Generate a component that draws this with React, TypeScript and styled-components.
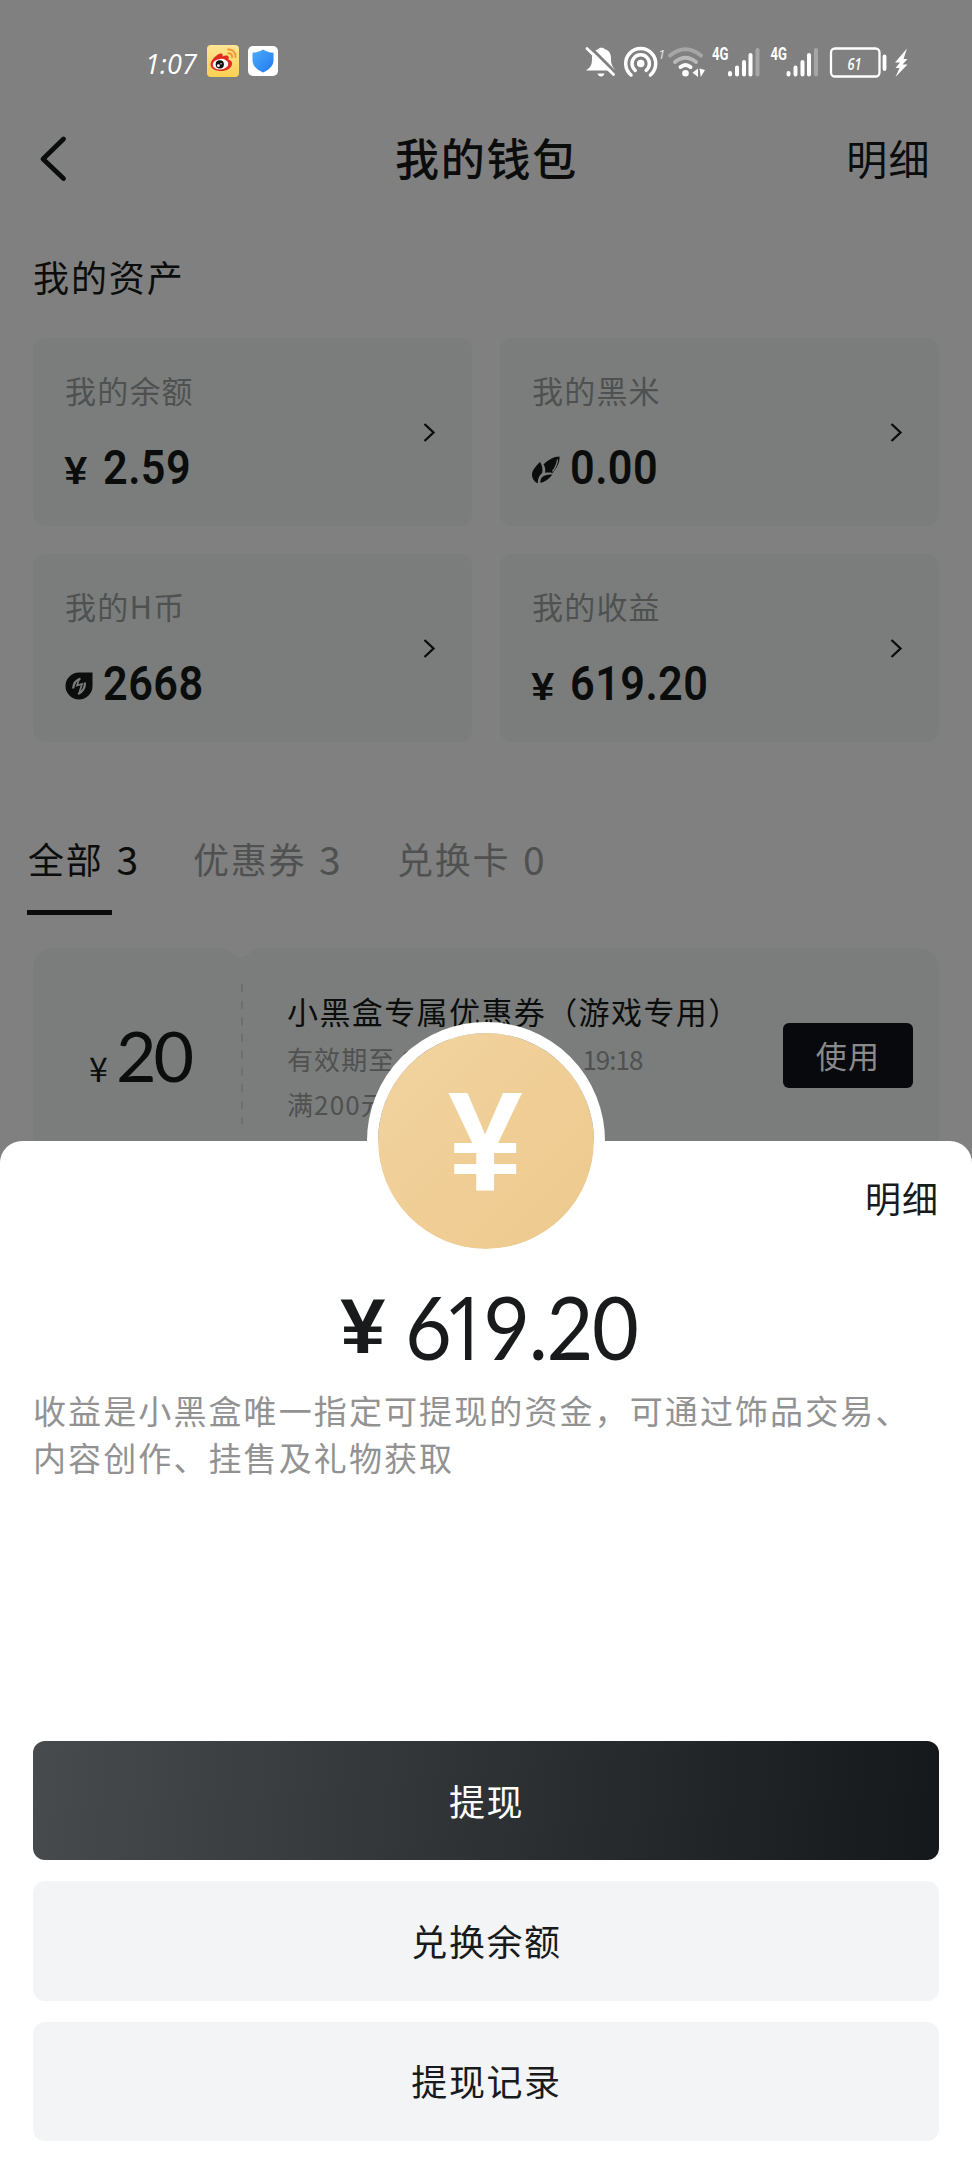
import React from "react";
import styled, { createGlobalStyle } from "styled-components";

const INK = "#0b0d0d";
const DIM = "#4f5151";
const CARD = "#7b7d7c";

const GlobalStyle = createGlobalStyle`
  * { box-sizing: border-box; }
  html, body { margin: 0; padding: 0; background: #808080; }
  body { font-family: "Noto Sans CJK SC", "Noto Sans", sans-serif; color: ${INK}; }
  button { font: inherit; border: 0; padding: 0; background: none; color: inherit; }
`;

const Screen = styled.div`
  position: relative;
  width: 972px;
  height: 2160px;
  overflow: hidden;
  background: #808080;
`;

const StatusBar = styled.header`
  height: 92px;
  padding: 31px 62px 1px 145px;
  display: flex;
  align-items: center;
  justify-content: space-between;
`;

const StatusGroup = styled.div`
  display: flex;
  align-items: center;
`;

const Clock = styled.span`
  width: 62px;
  font: italic 400 27px/60px "Open Sans", sans-serif;
  letter-spacing: 0.2px;
  color: #fff;
  padding-top: 5px;
`;

const NavBar = styled.nav`
  height: 132px;
  padding: 0 41px 0 38px;
  display: grid;
  grid-template-columns: 180px 1fr 180px;
  align-items: center;
`;

const NavTitle = styled.h1`
  margin: 0;
  text-align: center;
  font-size: 44px;
  font-weight: 500;
  line-height: 56px;
  letter-spacing: 1.7px;
  padding: 0 0 2px 4px;
`;

const NavAction = styled.button`
  justify-self: end;
  font-size: 41px;
  line-height: 56px;
  letter-spacing: 1.4px;
  padding-bottom: 2px;
`;

const SectionTitle = styled.h2`
  margin: 0;
  height: 114px;
  padding: 0 33px 10px;
  display: flex;
  align-items: center;
  font-size: 36px;
  font-weight: 400;
  letter-spacing: 1.9px;
`;

const AssetGrid = styled.section`
  padding: 0 33px;
  display: grid;
  grid-template-columns: 1fr 1fr;
  grid-auto-rows: 188px;
  gap: 28px;
`;

const AssetCard = styled.article`
  padding: 29px 36px 0 32px;
  display: flex;
  justify-content: space-between;
  border-radius: 12px;
  background: ${CARD};
`;

const AssetLabel = styled.div`
  height: 46px;
  line-height: 46px;
  font-size: 31px;
  letter-spacing: 1.2px;
  color: ${DIM};
`;

const AssetValue = styled.div`
  margin-top: 31px;
  height: 48px;
  display: flex;
  align-items: center;
`;

const AssetSymbol = styled.span`
  width: 38px;
  height: 48px;
  display: flex;
  align-items: center;
  padding-top: 4px;
`;

const Yen = styled.span<{ $size: number; $stretch: number }>`
  font-family: "Liberation Sans", sans-serif;
  font-weight: 700;
  font-size: ${(p) => p.$size}px;
  line-height: 1;
  transform: scaleX(${(p) => p.$stretch});
`;

const AssetNumber = styled.span`
  font-family: Roboto, sans-serif;
  font-weight: 600;
  font-size: 48px;
  line-height: 48px;
  letter-spacing: 0.5px;
  transform: scaleX(0.9);
  transform-origin: left;
`;

const ArrowCell = styled.div`
  padding-top: 54px;
`;

const Tabs = styled.div`
  margin-top: 93px;
  padding-left: 28px;
  height: 80px;
  display: flex;
`;

const Tab = styled.button<{ $active?: boolean; $width: number }>`
  width: ${(p) => p.$width}px;
  height: 80px;
  text-align: left;
  display: flex;
  flex-direction: column;
  justify-content: space-between;
  font-size: 36px;
  line-height: 46px;
  letter-spacing: 1.7px;
  color: ${(p) => (p.$active ? INK : DIM)};
`;

const TabText = styled.span`
  display: flex;
  gap: 13px;
`;

const TabCount = styled.span`
  font-size: 39px;
`;

const TabLine = styled.span`
  width: 85px;
  height: 5px;
  margin-left: -1px;
  background: ${INK};
`;

const Coupon = styled.section`
  position: relative;
  margin: 33px 33px 0;
  height: 260px;
  display: flex;
  border-radius: 20px;
  background: ${CARD};
`;

const CouponNotch = styled.svg`
  position: absolute;
  left: 190px;
  top: 0;
`;

const CouponAmount = styled.div`
  width: 208px;
  padding: 57px 0 0 56px;
  display: flex;
  align-items: baseline;
  line-height: 100px;
`;

const CouponYen = styled.span`
  width: 27px;
  font-size: 34px;
`;

const CouponNumber = styled.span`
  font-family: Lato, sans-serif;
  font-size: 70px;
  letter-spacing: -3px;
`;

const Perforation = styled.svg`
  margin-top: 36px;
  flex: none;
`;

const CouponInfo = styled.div`
  flex: 1;
  padding: 40px 0 0 44px;
  color: ${DIM};
  white-space: nowrap;
`;

const CouponTitle = styled.div`
  font-size: 31px;
  line-height: 46px;
  letter-spacing: 1.4px;
  color: ${INK};
  padding-bottom: 2px;
`;

const CouponMeta = styled.div`
  display: flex;
  font-size: 26px;
  line-height: 44px;
  letter-spacing: 1.1px;
  padding-top: 1px;
`;

const MetaDate = styled.span`
  width: 187px;
  padding-left: 7px;
  letter-spacing: 3.6px;
`;

const MetaTime = styled.span`
  letter-spacing: -1px;
`;

const UseButton = styled.button`
  width: 130px;
  height: 65px;
  margin: 75px 26px 0 0;
  border-radius: 6px;
  background: #08090c;
  color: #8a8a8c;
  font-size: 31px;
  letter-spacing: 1.2px;
  line-height: 62px;
  padding-bottom: 2px;
`;

const Sheet = styled.section`
  position: absolute;
  left: 0;
  right: 0;
  bottom: 0;
  height: 1019px;
  padding: 33px 33px 19px;
  display: flex;
  flex-direction: column;
  border-radius: 22px 22px 0 0;
  background: #fff;
  color: #181a1c;
`;

const Coin = styled.div`
  position: absolute;
  left: 367px;
  top: -119px;
  width: 238px;
  height: 238px;
  display: flex;
  align-items: center;
  justify-content: center;
  padding-right: 2px;
  border: 11px solid #fff;
  border-radius: 50%;
  background: linear-gradient(135deg, #f2d3a0, #edc98c) padding-box;
  color: #fff;
`;

const SheetAction = styled.button`
  align-self: flex-end;
  font-size: 36px;
  line-height: 46px;
  letter-spacing: 1px;
`;

const SheetAmount = styled.div`
  margin-top: 60px;
  height: 92px;
  padding-left: 308px;
  display: flex;
  align-items: center;
`;

const SheetYen = styled.span`
  width: 64px;
  display: flex;
`;

const SheetNumber = styled.span`
  font-family: Lato, sans-serif;
  font-weight: 400;
  font-size: 87px;
  line-height: 92px;
  letter-spacing: -1.5px;
  transform: scaleX(0.93);
  transform-origin: left;
`;

const NarrowDigit = styled.span`
  margin: 0 -5px 0 -8px;
  font-family: "Open Sans", sans-serif;
`;

const SheetNote = styled.p`
  margin: 15px 0 0;
  font-size: 33px;
  line-height: 47px;
  letter-spacing: 2.1px;
  white-space: nowrap;
  color: #929292;
`;

const Actions = styled.div`
  margin-top: auto;
  display: flex;
  flex-direction: column;
  gap: 21px;
`;

const ActionButton = styled.button<{ $primary?: boolean }>`
  height: 119.3px;
  padding: 0 0 2px 1px;
  border-radius: 12px;
  font-size: 36px;
  letter-spacing: 1.6px;
  color: ${(p) => (p.$primary ? "#fff" : "#181a1c")};
  background: ${(p) =>
    p.$primary ? "linear-gradient(97deg, #484b4e, #14181b)" : "#f3f4f6"};
`;

const WeiboIcon = () => (
  <svg width="32" height="32" viewBox="0 0 32 32">
    <defs>
      <linearGradient id="wb" x1="0" y1="0" x2="0" y2="1">
        <stop offset="0" stopColor="#ffe694" />
        <stop offset="1" stopColor="#fbd052" />
      </linearGradient>
    </defs>
    <rect width="32" height="32" rx="4" fill="url(#wb)" />
    <path
      d="M3.500 19.500c0-4.500 7.500-12 11-11 1.500.4 1.300 2 1 3 2.500-1.200 6-1.500 6.200.8.100 1-.4 1.900-.3 2.200 2 .7 4 2 3.600 4.700-.6 4-5.500 6.800-11 6.800-5.800 0-10.500-2.600-10.500-6.500z"
      fill="#e02b20"
    />
    <ellipse cx="13.500" cy="19.200" rx="7.800" ry="5.300" fill="#fff" transform="rotate(-6 13.500 19.200)" />
    <circle cx="12.800" cy="19.400" r="4.100" fill="#111" />
    <circle cx="11.400" cy="20.700" r="1.400" fill="#fff" />
    <circle cx="14" cy="18.800" r=".7" fill="#fff" />
    <path d="M21 4.500c4.500-.6 8 2.900 7.600 7.500M21.300 8.300c2.400-.3 4.200 1.500 3.800 3.900" fill="none" stroke="#f0982c" strokeWidth="1.900" strokeLinecap="round" />
  </svg>
);

const ShieldSvg = styled.svg`
  margin-left: 9px;
`;

const ShieldIcon = () => (
  <ShieldSvg width="30" height="30" viewBox="0 0 30 30">
    <defs>
      <linearGradient id="sh" x1="0" y1="0" x2="1" y2="1">
        <stop offset="0" stopColor="#4bacfb" />
        <stop offset="1" stopColor="#2279f0" />
      </linearGradient>
    </defs>
    <rect width="30" height="30" rx="5" fill="#fff" />
    <path d="M15 3.500c3 2 6.500 3 10.500 3.300v7.400c0 5.800-4.500 9.600-10.500 12.300C9 23.800 4.500 20 4.500 14.200V6.800C8.500 6.500 12 5.500 15 3.500z" fill="url(#sh)" />
  </ShieldSvg>
);

const Signal = ({ x }: { x: number }) => (
  <g>
    <text x={x} y="29" fontFamily="Roboto" fontWeight="700" fontSize="18" fill="#fff" textLength="16.500" lengthAdjust="spacingAndGlyphs">
      4G
    </text>
    <g stroke="#fff" strokeWidth="4" strokeLinecap="round">
      <path d={`M${x + 18} 42v1.500M${x + 25} 36.500v7M${x + 32} 31v12.500M${x + 38.500} 24v19.500`} />
      <path d={`M${x + 45.500} 19v24.500`} opacity=".3" />
    </g>
  </g>
);

const StatusIcons = () => (
  <svg width="330" height="60" viewBox="0 0 330 60">
    <g transform="translate(0 -1)">
      <path d="M9 38c2.500-2.500 3-5 3-10 0-5 3-8 6.500-9 .5-1.800 5.500-1.800 6 0 4 1 6.500 4 6.500 9 0 5 .5 7.500 3.500 11v1.500H6z" fill="#fff" />
      <path d="M17.500 43.500h7c-.8 4-6.200 4-7 0z" fill="#fff" />
      <path d="M9 16l29 29" stroke="#808080" strokeWidth="3" />
      <path d="M7 18.500l26.500 26" stroke="#fff" strokeWidth="2.800" strokeLinecap="round" />
    </g>
    <g fill="none" stroke="#fff" strokeWidth="3.500" strokeLinecap="round" transform="translate(60.700 32.500)">
      <path d="M-9.700 11.500a15 15 0 1 1 19.400 0" />
      <path d="M-5.500 6.800a8.700 8.700 0 1 1 11 0" />
      <circle r="3" fill="#fff" strokeWidth="1.500" />
    </g>
    <text x="78" y="28" fontFamily="Open Sans" fontStyle="italic" fontSize="13" fill="#fff" opacity=".8">1</text>
    <g fill="none" stroke="#fff" strokeWidth="4" strokeLinecap="round">
      <path d="M90 24.500q15.500-12.500 31 0" opacity=".3" />
      <path d="M95 31q10.500-8.500 21 0" opacity=".45" />
      <path d="M100.500 36q5-4 10 0" />
    </g>
    <circle cx="105.500" cy="42.300" r="3.300" fill="#fff" />
    <path d="M118 37.500v8.500l-5.500-4.200zM119.500 37.500l5.500 1.500-4.200 7z" fill="#fff" />
    <Signal x={132} />
    <Signal x={190.5} />
    <rect x="251" y="17.500" width="48.500" height="28" rx="4" fill="none" stroke="#fff" strokeWidth="2.300" />
    <text x="267.500" y="38.500" fontFamily="Open Sans" fontStyle="italic" fontWeight="600" fontSize="17" fill="#fff" textLength="14" lengthAdjust="spacingAndGlyphs">61</text>
    <path d="M304.500 25.500v12.500" stroke="#fff" strokeWidth="3.800" strokeLinecap="round" />
    <path d="M327 17.500l-12 14h5l-4.500 5.500h4l-4 9 12-12.500h-5l5-5.500h-4z" fill="#fff" />
  </svg>
);

const BackIcon = () => (
  <svg width="30" height="48" viewBox="0 0 30 48">
    <path d="M25.500 5L5 25l20.500 19.500" fill="none" stroke={INK} strokeWidth="4.800" strokeLinecap="round" strokeLinejoin="round" />
  </svg>
);

const Arrow = () => (
  <svg width="14" height="22" viewBox="0 0 14 22">
    <path d="M2.500 3l9 8.500-9 8.500" fill="none" stroke={INK} strokeWidth="2.300" />
  </svg>
);

const RiceIcon = () => (
  <svg width="28" height="28" viewBox="0 0 28 28">
    <path d="M8 6C2 12-1 16 .3 21c.8 3 3 5.500 5.700 6.300C5.500 23 7 20 10 17c1-3 .5-7-2-11z" fill={INK} />
    <path d="M11.500 8.500C16 4 22 .5 27.500.5c.5 6-3 12-7 16.500-2.500-.5-5-.6-7.500-.2.700-3 .2-6-1.500-8.300z" fill={INK} />
    <path d="M8.500 27c-.8-5 2.500-9 12-8.500-3.500 4-7.500 7.500-12 8.500z" fill={INK} />
    <path d="M25.500 3.500c-.3 4.500-2.300 8.500-5 12" fill="none" stroke={CARD} strokeWidth="1.300" />
  </svg>
);

const HCoinIcon = () => (
  <svg width="28" height="28" viewBox="0 0 28 28">
    <path d="M14 .5h13.500V14A13.500 13.500 0 1 1 14 .5z" fill={INK} />
    <g fill="none" stroke={CARD} strokeWidth="2.200">
      <path d="M15.500 6.500c-4.500 1.500-7 5-7.300 10" />
      <path d="M20 10.500c0 5.500-2.500 9.500-7 11.500" />
      <path d="M14 7.500l-2 6 5-1.500-2.500 8" strokeWidth="1.700" />
    </g>
  </svg>
);

const assets = [
  { label: "我的余额", value: "2.59", symbol: "yen" },
  { label: "我的黑米", value: "0.00", symbol: "rice" },
  { label: "我的H币", value: "2668", symbol: "coin" },
  { label: "我的收益", value: "619.20", symbol: "yen" },
];

const symbols: Record<string, React.ReactNode> = {
  yen: <Yen $size={39} $stretch={1.06}>¥</Yen>,
  rice: <RiceIcon />,
  coin: <HCoinIcon />,
};

export default function App() {
  return (
    <Screen>
      <GlobalStyle />
      <StatusBar>
        <StatusGroup>
          <Clock>1:07</Clock>
          <WeiboIcon />
          <ShieldIcon />
        </StatusGroup>
        <StatusIcons />
      </StatusBar>
      <NavBar>
        <BackIcon />
        <NavTitle>我的钱包</NavTitle>
        <NavAction>明细</NavAction>
      </NavBar>
      <SectionTitle>我的资产</SectionTitle>
      <AssetGrid>
        {assets.map((a) => (
          <AssetCard key={a.label}>
            <div>
              <AssetLabel>{a.label}</AssetLabel>
              <AssetValue>
                <AssetSymbol>{symbols[a.symbol]}</AssetSymbol>
                <AssetNumber>{a.value}</AssetNumber>
              </AssetValue>
            </div>
            <ArrowCell>
              <Arrow />
            </ArrowCell>
          </AssetCard>
        ))}
      </AssetGrid>
      <Tabs>
        <Tab $active $width={165}>
          <TabText>
            全部<TabCount>3</TabCount>
          </TabText>
          <TabLine />
        </Tab>
        <Tab $width={204}>
          <TabText>
            优惠券<TabCount>3</TabCount>
          </TabText>
        </Tab>
        <Tab $width={180}>
          <TabText>
            兑换卡<TabCount>0</TabCount>
          </TabText>
        </Tab>
      </Tabs>
      <Coupon>
        <CouponNotch width="36" height="10" viewBox="0 0 36 10">
          <path d="M0 0h36c-7 0-9 9-18 9S7 0 0 0z" fill="#808080" />
        </CouponNotch>
        <CouponAmount>
          <CouponYen>¥</CouponYen>
          <CouponNumber>20</CouponNumber>
        </CouponAmount>
        <Perforation width="2" height="140" viewBox="0 0 2 140">
          <path d="M1 0v140" stroke="#6d6f6f" strokeWidth="2" strokeDasharray="8 8.700" />
        </Perforation>
        <CouponInfo>
          <CouponTitle>小黑盒专属优惠券（游戏专用）</CouponTitle>
          <CouponMeta>
            有效期至
            <MetaDate>2023-02-03</MetaDate>
            <MetaTime>19:18</MetaTime>
          </CouponMeta>
          <CouponMeta>满200元可用</CouponMeta>
        </CouponInfo>
        <UseButton>使用</UseButton>
      </Coupon>
      <Sheet>
        <Coin>
          <Yen $size={141} $stretch={0.95}>¥</Yen>
        </Coin>
        <SheetAction>明细</SheetAction>
        <SheetAmount>
          <SheetYen>
            <Yen $size={78} $stretch={1.04}>¥</Yen>
          </SheetYen>
          <SheetNumber>
            6<NarrowDigit>1</NarrowDigit>9.20
          </SheetNumber>
        </SheetAmount>
        <SheetNote>
          收益是小黑盒唯一指定可提现的资金，可通过饰品交易、
          <br />
          内容创作、挂售及礼物获取
        </SheetNote>
        <Actions>
          <ActionButton $primary>提现</ActionButton>
          <ActionButton>兑换余额</ActionButton>
          <ActionButton>提现记录</ActionButton>
        </Actions>
      </Sheet>
    </Screen>
  );
}
